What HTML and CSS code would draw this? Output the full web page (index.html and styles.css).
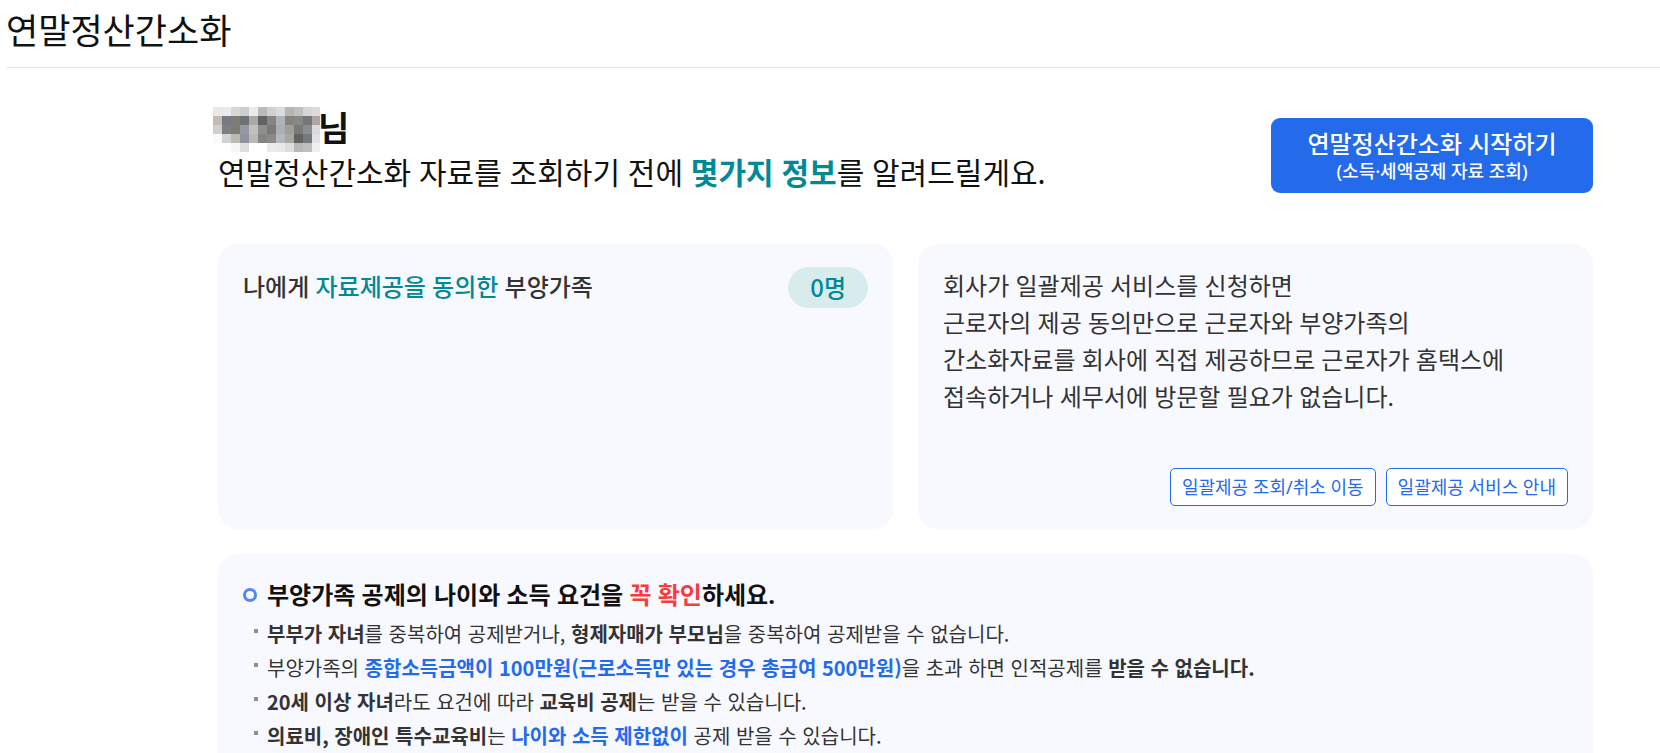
FILE: index.html
```html
<!DOCTYPE html>
<html lang="ko">
<head>
    <meta charset="UTF-8">
    <meta name="viewport" content="width=device-width, initial-scale=1.0">
    <title>연말정산간소화</title>
    <link rel="stylesheet" href="styles.css">
</head>
<body>
    <header class="page-header">
        <h1>연말정산간소화</h1>
    </header>

    <main class="container">
        <div class="intro">
            <div class="intro-text">
                <h2 class="user-name">
                    <svg class="masked-name" width="107" height="45" viewBox="0 0 107 45" shape-rendering="crispEdges" role="img" aria-label="이름 가림"></svg><span>님</span>
                </h2>
                <p class="lead">연말정산간소화 자료를 조회하기 전에 <strong>몇가지 정보</strong>를 알려드릴게요.</p>
            </div>
            <button type="button" class="start-btn">
                <span class="start-title">연말정산간소화 시작하기</span>
                <span class="start-sub">(소득·세액공제 자료 조회)</span>
            </button>
        </div>

        <div class="cards">
            <section class="card">
                <div class="family">
                    <h3>나에게 <em>자료제공을 동의한</em> 부양가족</h3>
                    <span class="count">0명</span>
                </div>
            </section>
            <section class="card company">
                <p>회사가 일괄제공 서비스를 신청하면<br>근로자의 제공 동의만으로 근로자와 부양가족의<br>간소화자료를 회사에 직접 제공하므로 근로자가 홈택스에<br>접속하거나 세무서에 방문할 필요가 없습니다.</p>
                <div class="btn-group">
                    <button type="button" class="line-btn">일괄제공 조회/취소 이동</button>
                    <button type="button" class="line-btn">일괄제공 서비스 안내</button>
                </div>
            </section>
        </div>

        <section class="card notice">
            <h3>부양가족 공제의 나이와 소득 요건을 <em>꼭 확인</em>하세요.</h3>
            <ul>
                <li><b>부부가 자녀</b>를 중복하여 공제받거나, <b>형제자매가 부모님</b>을 중복하여 공제받을 수 없습니다.</li>
                <li>부양가족의 <b class="blue">종합소득금액이 100만원(근로소득만 있는 경우 총급여 500만원)</b>을 초과 하면 인적공제를 <b>받을 수 없습니다.</b></li>
                <li><b>20세 이상 자녀</b>라도 요건에 따라 <b>교육비 공제</b>는 받을 수 있습니다.</li>
                <li><b>의료비, 장애인 특수교육비</b>는 <b class="blue">나이와 소득 제한없이</b> 공제 받을 수 있습니다.</li>
            </ul>
        </section>
    </main>

    <script>
        // mosaic over the user's name, one colour per 9px cell
        const mosaic = [
            ['#ebe9e7', '#e8eaec', '#dad6d2', '#caced2', '#ebebe7', '#b8babc', '#d3d1cf', '#d8dce0', '#b8b6b2', '#bfc1c0', '#d4d6d8', '#dedcda'],
            ['#c4bcb4', '#777a7e', '#807a74', '#6b7379', '#aaa9a8', '#626262', '#878481', '#acb5bd', '#8b837b', '#848a87', '#76767d', '#afa6a3'],
            ['#d5cfcb', '#7e7f80', '#807b77', '#929ba5', '#c3bfbb', '#8e8e8a', '#7b7a7a', '#a8b0b4', '#9f9e98', '#7a7979', '#898e91', '#dcd9dc'],
            ['#fafafa', '#d2d3d3', '#bdb9b4', '#8e939c', '#bcb8b4', '#828583', '#8b8a88', '#b2babf', '#a9a6a0', '#626262', '#757b7d', '#e0e1e6'],
            ['#ffffff', '#ffffff', '#f7f7f7', '#dcdddf', '#ffffff', '#ffffff', '#ebebea', '#e7e8ea', '#dddddb', '#b8b8b8', '#bfbfc0', '#f0f0f1']
        ];
        const svg = document.querySelector('.masked-name');

        mosaic.forEach((row, y) => {
            row.forEach((color, x) => {
                const cell = document.createElementNS('http://www.w3.org/2000/svg', 'rect');
                cell.setAttribute('x', x * 9);
                cell.setAttribute('y', y * 9);
                cell.setAttribute('width', 9);
                cell.setAttribute('height', 9);
                cell.setAttribute('fill', color);
                svg.appendChild(cell);
            });
        });
    </script>
</body>
</html>
```

FILE: styles.css
```css
* {
    box-sizing: border-box;
}

body {
    margin: 0;
    background-color: #fff;
    color: #111;
    font-family: "Noto Sans", "Noto Sans CJK KR", sans-serif;
}

h1, h2, h3, p, ul {
    margin: 0;
    padding: 0;
}

button {
    font-family: inherit;
    cursor: pointer;
}

em {
    font-style: normal;
}

.page-header {
    margin-left: 6px;
    padding: 5px 0 10px;
    border-bottom: 1px solid #e6e8ea;
}

.page-header h1 {
    font-size: 35px;
    font-weight: 400;
    line-height: 52px;
}

.container {
    margin: 0 67px 0 218px;
    padding-top: 39px;
}

.intro {
    display: flex;
    justify-content: space-between;
    align-items: flex-end;
    margin-bottom: 51px;
}

.user-name {
    display: flex;
    align-items: center;
    margin-left: -5px;
    font-size: 34px;
    line-height: 45px;
}

.user-name span {
    padding-bottom: 2px;
    line-height: 43px;
}

.masked-name {
    position: relative;
    margin-right: -2px;
}

.lead {
    font-size: 30px;
    line-height: 41px;
}

.lead strong {
    color: #008a96;
}

.start-btn {
    display: flex;
    flex-direction: column;
    align-items: center;
    justify-content: center;
    width: 322px;
    height: 75px;
    padding: 0;
    border: 0;
    border-radius: 9px;
    background-color: #246beb;
    color: #fff;
    font-weight: 500;
}

.start-title {
    font-size: 24px;
    line-height: 30px;
}

.start-sub {
    font-size: 18px;
    line-height: 24px;
}

.cards {
    display: grid;
    grid-template-columns: 1fr 1fr;
    gap: 25px;
    margin-bottom: 25px;
}

.card {
    padding: 23px 25px;
    border-radius: 20px;
    background-color: #f8f9ff;
    color: #333;
}

.family {
    display: flex;
    justify-content: space-between;
    align-items: flex-start;
}

.family h3 {
    font-size: 24px;
    font-weight: 500;
    line-height: 39px;
}

.family em {
    color: #008a96;
}

.count {
    padding: 0 22px 2px;
    border-radius: 21px;
    background-color: #d8eced;
    color: #008a96;
    font-family: "Noto Sans CJK KR", sans-serif;
    font-size: 24px;
    font-weight: 500;
    line-height: 39px;
}

.company p {
    font-size: 24px;
    line-height: 37px;
}

.btn-group {
    display: flex;
    justify-content: flex-end;
    gap: 10px;
    margin-top: 53px;
}

.line-btn {
    height: 38px;
    padding: 0 11px 2px;
    border: 1px solid #246beb;
    border-radius: 5px;
    background-color: #fff;
    color: #246beb;
    font-size: 18px;
}

.notice h3 {
    display: flex;
    align-items: center;
    white-space: pre;
    color: #111;
    font-size: 24px;
    line-height: 36px;
}

.notice h3::before {
    content: "";
    box-sizing: border-box;
    width: 14px;
    height: 14px;
    margin-right: 10px;
    border: 3px solid #5089ef;
    border-radius: 50%;
}

.notice h3 em {
    color: #f63d3d;
}

.notice ul {
    margin-top: 4px;
    list-style: none;
}

.notice li {
    position: relative;
    padding-left: 24px;
    font-family: "Noto Sans CJK KR", sans-serif;
    font-size: 20px;
    line-height: 34px;
}

.notice li::before {
    content: "";
    position: absolute;
    top: 12px;
    left: 11px;
    width: 4px;
    height: 4px;
    background-color: #8e8e8e;
}

.blue {
    color: #246beb;
}
```
